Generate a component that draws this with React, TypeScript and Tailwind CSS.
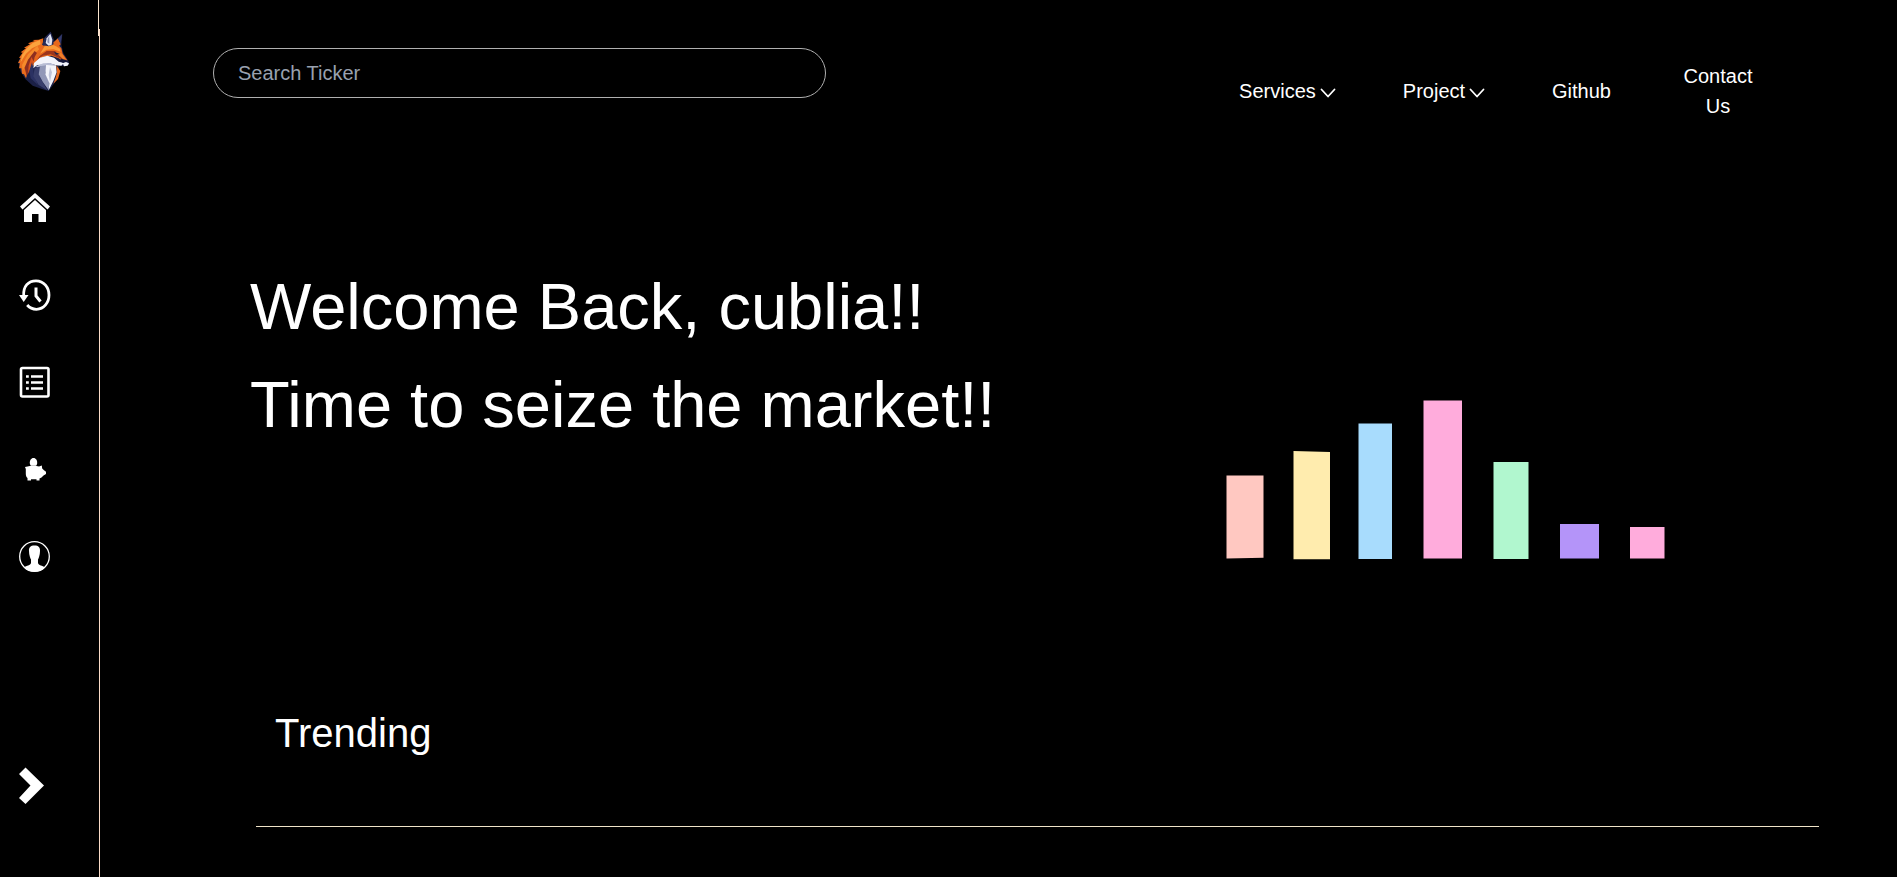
import React from "react";

function FoxLogo() {
  return (
    <svg className="block" width="52" height="60" viewBox="12 6 156 180" aria-hidden="true">
      <path fill="#1b2046" d="M84 46 92 26 110 8 122 36 145 14 142 48 148 72 162 94 166 106 152 112 134 110 136 130 126 156 104 186 84 180 56 170 34 150 20 128 13 98 26 70 50 44Z" />
      <path fill="#ea6d1d" d="M88 28 74 32 56 33 62 36 42 43 48 46 30 56 36 58 20 70 26 71 15 86 20 87 12 102 18 103 15 118 22 118 24 134 30 136 36 148 42 128 56 104 76 80 96 60 86 48Z" />
      <path fill="#fba23d" d="M78 33 56 42 38 58 24 78 20 100 36 74 54 58 80 46Z" />
      <path fill="#f58a2b" d="M70 50 42 76 24 108 26 126 40 98 56 76 76 62Z" />
      <path fill="#8e2f20" d="M62 66 42 92 32 116 38 142 46 120 56 100 76 78Z" />
      <path fill="#d9531c" d="M52 84 44 110 42 134 52 116 60 98Z" />
      <path fill="#2b3162" d="M54 100 46 126 50 148 72 168 60 140 58 120Z" />
      <path fill="#e8681d" d="M80 52 104 46 130 44 142 58 146 74 160 94 150 100 134 88 112 80 86 84 68 98 56 112 62 84Z" />
      <path fill="#fb9a38" d="M92 52 120 48 138 59 140 68 118 61 98 62 78 74Z" />
      <path fill="#9b351d" d="M98 66 122 66 140 76 148 94 134 86 110 76 86 80 68 94 78 80Z" />
      <path fill="#f08029" d="M124 68 142 72 156 93 144 88Z" />
      <path fill="#1b2046" d="M120 68 138 75 126 77Z" />
      <path fill="#252b57" d="M84 48 92 26 110 8 120 46 104 52Z" />
      <path fill="#e3e6f3" d="M98 28 109 14 115 32 113 47 104 50 95 42Z" />
      <path fill="#8b91b4" d="M101 30 106 21 106 44 100 40Z" />
      <path fill="#e8681d" d="M119 40 132 28 140 46 134 52 118 48Z" />
      <path fill="#353b6c" d="M132 29 144 16 140 44Z" />
      <path fill="#f3f4fb" d="M58 118 60 102 78 86 100 80 120 86 134 98 150 102 142 110 126 109 106 103 86 107 70 108Z" />
      <path fill="#b9bed6" d="M66 112 88 103 108 102 124 108 96 110 74 122Z" />
      <path fill="#383e6b" d="M62 116 82 112 74 134 84 156 100 184 74 168 58 142Z" />
      <path fill="#9298b8" d="M78 112 102 108 94 132 106 158 104 184 86 158 74 136Z" />
      <path fill="#f3f4fb" d="M96 108 126 109 128 130 118 156 104 184 106 162 94 136Z" />
      <path fill="#bfc4d9" d="M108 114 114 130 108 158 104 138Z" />
      <path fill="#e8681d" d="M127 109 139 126 132 150 118 164 125 146 129 130Z" />
      <path fill="#15183a" d="M142 89 156 93 165 98 164 107 152 104 136 95Z" />
      <path fill="#f3f4fb" d="M146 103 156 99 165 103 161 110 150 112Z" />
    </svg>
  );
}

function HomeIcon() {
  return (
    <svg className="block" width="32" height="32" viewBox="0 0 32 32" fill="white" aria-hidden="true">
      <path d="M16 1 31 14.5 28.5 17.5 16 6 3.500 17.500 1 14.500Z" />
      <path d="M16 8 27 18V30H19.500V22H13V30H5V18Z" />
    </svg>
  );
}

function HistoryIcon() {
  return (
    <svg className="block" width="32" height="34" viewBox="0 0 32 34" fill="none" stroke="white" aria-hidden="true">
      <path strokeWidth="2.800" d="M4.700 18C4 8 9.500 2.800 17 2.800C25 2.800 30 9.500 30 17S25 31.300 17.500 31.300C13.500 31.300 10.500 29.800 8.200 27" />
      <path fill="white" stroke="none" d="M0 17H9.500L4.700 24Z" />
      <path strokeWidth="3" d="M17 9.500V18L21.500 23.500" />
    </svg>
  );
}

function ListIcon() {
  return (
    <svg className="block" width="32" height="32" viewBox="0 0 32 32" fill="none" stroke="white" aria-hidden="true">
      <rect x="2" y="2" width="27.500" height="28.500" rx="1.500" strokeWidth="2.600" />
      <path strokeWidth="2.400" d="M7 10.500h2.800M12 10.500h12M7 16.500h2.800M12 16.500h12M7 22.500h2.800M12 22.500h12" />
    </svg>
  );
}

function PiggyIcon() {
  return (
    <svg className="block" width="32" height="32" viewBox="0 0 32 32" fill="white" aria-hidden="true">
      <path d="M14.500 5C17 5 18.200 7.500 18.200 9.700C18.200 11 17.700 12 17 12.700H12C11.300 12 10.800 11 10.800 9.700C10.800 7.500 12 5 14.500 5Z" />
      <path d="M8.500 13.500C11 12.500 17.500 12.500 20 13.500L22.800 12.500 23.200 15.500 25 17.300 27 18.700V21L24.500 22.500 22.500 24.500 20.500 25.500V27.500H17.500V26.200H12V27.500H8.500V25C7.300 24 6.800 22.500 6.800 20.500V16L6 14Z" />
    </svg>
  );
}

function UserIcon() {
  return (
    <svg className="block" width="32" height="32" viewBox="0 -1 32 32" fill="white" aria-hidden="true">
      <circle cx="15.500" cy="15.500" r="14.800" fill="none" stroke="white" strokeWidth="1.300" />
      <path d="M15.500 4.500C19.500 4.500 21.300 6.500 21 10C21 14.500 19.500 17.500 19 18.500V22C19.500 24.500 23.500 24.500 26 26.500C23.500 29.500 19.500 30.800 15.500 30.800S7.500 29.500 5 26.500C7.500 24.500 11.500 24.500 12 22V18.500C11.500 17.500 10 14.500 10 10C9.700 6.500 11.500 4.500 15.500 4.500Z" />
    </svg>
  );
}

function Chevron() {
  return (
    <svg width="16" height="16" viewBox="0 0 16 16" fill="none" stroke="white" strokeWidth="1.800" strokeLinecap="round" strokeLinejoin="round" aria-hidden="true">
      <path d="M1.500 6.500 8 13.500 14.500 6.500" />
    </svg>
  );
}

const sideLinks = [
  { label: "Home", icon: <HomeIcon /> },
  { label: "History", icon: <HistoryIcon /> },
  { label: "Orders", icon: <ListIcon /> },
  { label: "Savings", icon: <PiggyIcon /> },
  { label: "Profile", icon: <UserIcon /> },
];

function Sidebar() {
  return (
    <aside className="flex w-[100px] shrink-0 flex-col">
      <div className="h-9 w-[99px] shrink-0 border-r border-[#fbe6d0]" />
      <div className="-mt-[7px] flex flex-1 flex-col border-r border-[#fbdcc8] pl-[18px]">
        <a href="#" aria-label="Dashboard" className="mt-0.5 block w-[52px]">
          <FoxLogo />
        </a>
        <nav className="mt-[101px] flex flex-1 flex-col items-start">
          <ul className="flex flex-col gap-[55px] pl-px">
            {sideLinks.map((l) => (
              <li key={l.label} className="flex h-8 items-center">
                <a href="#" aria-label={l.label}>{l.icon}</a>
              </li>
            ))}
          </ul>
          <button type="button" aria-label="Expand sidebar" className="mt-auto mb-[72px]">
            <svg width="26" height="38" viewBox="0 0 26 38" fill="white" aria-hidden="true">
              <path d="M7.500 .5 26 18.500 7.500 37 1 31 12.500 18.500 1 7Z" />
            </svg>
          </button>
        </nav>
      </div>
    </aside>
  );
}

function Chart() {
  return (
    <svg className="block" width="440" height="160" viewBox="0 0 440 160" role="img" aria-label="Market bars">
      <path fill="#ffc8c1" d="M.5 75.500H37.500V157.800L.5 158.500Z" />
      <path fill="#ffecae" d="M67.500 51 104 52V159.300H67.500Z" />
      <path fill="#a8dcfd" d="M132.500 23.500H166V159H132.500Z" />
      <path fill="#ffacdc" d="M197.500 .5H236V158.500H197.500Z" />
      <path fill="#b1f7cf" d="M267.500 62H302.500V159H267.500Z" />
      <path fill="#b494f9" d="M334 124H373V158.500H334Z" />
      <path fill="#ffacdc" d="M404 127H438.500V158.500H404Z" />
    </svg>
  );
}

export default function App() {
  return (
    <div className="flex min-h-screen bg-black font-['Liberation_Sans',Arial,sans-serif] text-white">
      <Sidebar />
      <main className="min-w-0 flex-1 pr-[78px] pl-[113px]">
        <header className="flex items-start justify-between pt-12">
          <input
            type="search"
            aria-label="Search Ticker"
            placeholder="Search Ticker"
            className="h-[50px] w-[613px] rounded-full border border-[#b0b0b0] bg-transparent px-6 text-xl placeholder:text-[#99a1af]"
          />
          <nav className="mt-3 mr-[61px] flex h-[62px] items-center gap-[67px] text-center text-xl leading-[30px]">
            <button type="button" className="flex items-center gap-1">Services <Chevron /></button>
            <button type="button" className="flex items-center gap-1">Project <Chevron /></button>
            <a href="#">Github</a>
            <a href="#" className="w-20">Contact Us</a>
          </nav>
        </header>
        <section className="flex items-start justify-between pr-[153px] pl-[37px]">
          <h1 className="mt-[136px] text-[65px] leading-[98px]">
            Welcome Back, cublia!!
            <br />
            Time to seize the market!!
          </h1>
          <div className="mt-[278px]">
            <Chart />
          </div>
        </section>
        <section className="mt-[143px] ml-[43px] border-b border-[#efe3c8] pb-[63px] pl-[19px]">
          <h2 className="text-[40px] leading-[60px]">Trending</h2>
        </section>
      </main>
    </div>
  );
}
